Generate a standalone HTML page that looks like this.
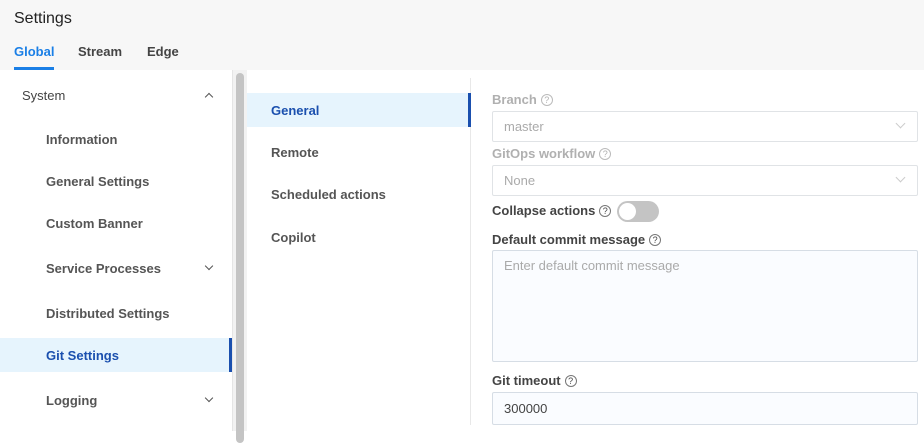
<!DOCTYPE html>
<html><head><style>
*{box-sizing:border-box;margin:0;padding:0}
body{width:924px;height:431px;overflow:hidden;background:#fff;font-family:"Liberation Sans",sans-serif;position:relative;color:#555}
.abs{position:absolute}
.hdr{left:0;top:0;width:924px;height:70px;background:#f7f7f7}
.t{font-size:13px;font-weight:bold;white-space:nowrap;line-height:16px}
.q{display:inline-block;width:12px;height:12px;border:1px solid #777;border-radius:50%;font-size:9px;line-height:10px;text-align:center;font-weight:normal;vertical-align:1px;margin-left:4px}
.inp{left:492px;width:426px;border:1px solid #e0e3e6;border-radius:2px;font-size:13px;padding-left:11px;}
.chev{width:7px;height:7px;border-right:1.5px solid #555;border-bottom:1.5px solid #555}
</style></head><body>
<div class="abs hdr"></div>
<div class="abs" style="left:14px;top:10px;font-size:16px;color:#222">Settings</div>
<div class="abs t" style="left:14px;top:44px;color:#1a7fe6">Global</div>
<div class="abs" style="left:14px;top:67px;width:40px;height:3px;background:#1a7fe6"></div>
<div class="abs t" style="left:78px;top:44px;color:#444">Stream</div>
<div class="abs t" style="left:147px;top:44px;color:#444">Edge</div>

<div class="abs" style="left:232px;top:70px;width:1px;height:361px;background:#e5e5e5"></div>
<div class="abs" style="left:233px;top:70px;width:14px;height:361px;background:#f2f2f2"></div>
<div class="abs" style="left:236px;top:73px;width:8px;height:370px;border-radius:4px;background:#c4c4c4"></div>
<div class="abs t" style="left:22px;top:88px;font-weight:normal;color:#444">System</div>
<div class="abs chev" style="left:206px;top:94px;transform:rotate(225deg);width:6px;height:6px"></div>
<div class="abs t" style="left:46px;top:132px">Information</div>
<div class="abs t" style="left:46px;top:174px">General Settings</div>
<div class="abs t" style="left:46px;top:216px">Custom Banner</div>
<div class="abs t" style="left:46px;top:261px">Service Processes</div>
<div class="abs chev" style="left:206px;top:263px;transform:rotate(45deg);width:6px;height:6px"></div>
<div class="abs t" style="left:46px;top:306px">Distributed Settings</div>
<div class="abs" style="left:0;top:338px;width:232px;height:34px;background:#e6f4fd"></div>
<div class="abs" style="left:229px;top:338px;width:3px;height:34px;background:#1a4fae"></div>
<div class="abs t" style="left:46px;top:348px;color:#1a4fae">Git Settings</div>
<div class="abs t" style="left:46px;top:393px">Logging</div>
<div class="abs chev" style="left:206px;top:395px;transform:rotate(45deg);width:6px;height:6px"></div>

<div class="abs" style="left:470px;top:78px;width:1px;height:347px;background:#e8e8e8"></div>
<div class="abs" style="left:247px;top:93px;width:221px;height:34px;background:#e6f4fd"></div>
<div class="abs" style="left:468px;top:93px;width:3px;height:34px;background:#1a4fae"></div>
<div class="abs t" style="left:271px;top:103px;color:#1a4fae">General</div>
<div class="abs t" style="left:271px;top:145px">Remote</div>
<div class="abs t" style="left:271px;top:187px">Scheduled actions</div>
<div class="abs t" style="left:271px;top:230px">Copilot</div>

<div class="abs t" style="left:492px;top:92px;color:#b0b0b0">Branch<span class="q" style="border-color:#bbb">?</span></div>
<div class="abs inp" style="top:111px;height:31px;line-height:29px;color:#aaa">master</div>
<div class="abs chev" style="left:897px;top:120px;transform:rotate(45deg);border-color:#ccc;border-width:1px"></div>
<div class="abs t" style="left:492px;top:146px;color:#b0b0b0">GitOps workflow<span class="q" style="border-color:#bbb">?</span></div>
<div class="abs inp" style="top:165px;height:31px;line-height:29px;color:#aaa">None</div>
<div class="abs chev" style="left:897px;top:174px;transform:rotate(45deg);border-color:#ccc;border-width:1px"></div>
<div class="abs t" style="left:492px;top:203px;color:#444">Collapse actions<span class="q">?</span></div>
<div class="abs" style="left:617px;top:201px;width:42px;height:21px;border-radius:11px;background:#c4c4c4"></div>
<div class="abs" style="left:619px;top:203px;width:17px;height:17px;border-radius:50%;background:#fff"></div>
<div class="abs t" style="left:492px;top:232px;color:#444">Default commit message<span class="q">?</span></div>
<div class="abs inp" style="top:250px;height:112px;background:#fafcff;border-color:#d6dde5;color:#aaa;padding-top:7px;line-height:16px">Enter default commit message</div>
<div class="abs t" style="left:492px;top:373px;color:#444">Git timeout<span class="q">?</span></div>
<div class="abs inp" style="top:392px;height:33px;line-height:31px;background:#fafcff;border-color:#d6dde5;color:#444">300000</div>
</body></html>
